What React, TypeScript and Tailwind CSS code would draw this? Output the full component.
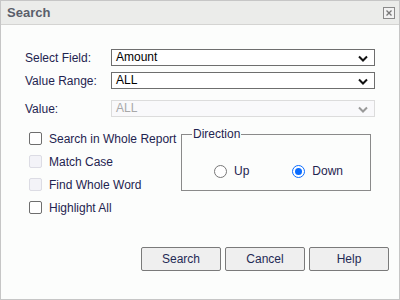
import React from "react";

const Chevron = ({ color }: { color: string }) => (
  <svg width="10" height="7" viewBox="0 0 10 7" className="absolute right-[6px] top-[5px]">
    <path d="M1 1.5 L5 5.5 L9 1.5" fill="none" stroke={color} strokeWidth="2" />
  </svg>
);

const Select = ({ value, disabled }: { value: string; disabled?: boolean }) => (
  <div
    className={
      disabled
        ? "relative h-[17px] w-[264px] border border-[#dcdcdc] bg-[#f9f9fb] pl-[4px] text-[12px] leading-[15px] text-[#a8a8a8]"
        : "relative h-[17px] w-[264px] border border-[#6e6e6e] bg-white pl-[4px] text-[12px] leading-[15px] text-black"
    }
  >
    {value}
    <Chevron color={disabled ? "#999" : "#111"} />
  </div>
);

const Check = ({ label, disabled }: { label: string; disabled?: boolean }) => (
  <div className="flex h-[23px] items-center">
    <div
      className={
        disabled
          ? "ml-[28px] h-[13px] w-[13px] rounded-[2px] border border-[#dcdce4] bg-[#f3f3f8]"
          : "ml-[28px] h-[13px] w-[13px] rounded-[2px] border border-[#6e6e6e] bg-white"
      }
    />
    <span className="ml-[7px]">{label}</span>
  </div>
);

const Btn = ({ label }: { label: string }) => (
  <div className="flex h-[24px] w-[80px] items-center justify-center rounded-[2px] border border-[#7a7a7a] bg-[#efefef] text-[12px] text-[#1f2a55]">
    {label}
  </div>
);

export default function App() {
  return (
    <div
      className="flex h-[300px] w-[400px] flex-col border border-[#c6c6c6] bg-[#fcfdfc] text-[12px] text-[#1f2450]"
      style={{ fontFamily: '"Liberation Sans", Arial, sans-serif' }}
    >
      <div className="flex h-[24px] shrink-0 items-center justify-between border-b border-[#d4d4d2] bg-[#ebecea] pl-[6px] pr-[4px]">
        <span className="text-[13px] font-bold text-[#5a5f6a]">Search</span>
        <div className="flex h-[12px] w-[12px] items-center justify-center border border-[#8a8a8a] bg-[#f2f2f2]">
          <svg width="8" height="8" viewBox="0 0 8 8">
            <path d="M1.5 1.5 L6.5 6.5 M6.5 1.5 L1.5 6.5" stroke="#777" strokeWidth="1.3" />
          </svg>
        </div>
      </div>
      <div className="flex flex-col pt-[24px]">
        <div className="flex h-[17px] items-center">
          <span className="ml-[24px] w-[86px]">Select Field:</span>
          <Select value="Amount" />
        </div>
        <div className="mt-[6px] flex h-[17px] items-center">
          <span className="ml-[24px] w-[86px]">Value Range:</span>
          <Select value="ALL" />
        </div>
        <div className="mt-[11px] flex h-[17px] items-center">
          <span className="ml-[24px] w-[86px]">Value:</span>
          <Select value="ALL" disabled />
        </div>
        <div className="mt-[10px] flex">
          <div className="flex w-[180px] flex-col">
            <Check label="Search in Whole Report" />
            <Check label="Match Case" disabled />
            <Check label="Find Whole Word" disabled />
            <Check label="Highlight All" />
          </div>
          <div className="relative mt-[7px] h-[57px] w-[190px] border border-[#8a8a8a]">
            <span className="absolute left-[10px] top-[-9px] bg-[#fcfdfc] px-[1px] leading-[16px]">Direction</span>
            <div className="flex items-center pt-[27px]">
              <div className="ml-[32px] h-[13px] w-[13px] rounded-full border border-[#777] bg-white" />
              <span className="ml-[7px]">Up</span>
              <div className="ml-[43px] flex h-[13px] w-[13px] items-center justify-center rounded-full border border-[#0a6cff] bg-white">
                <div className="h-[7px] w-[7px] rounded-full bg-[#0a6cff]" />
              </div>
              <span className="ml-[7px]">Down</span>
            </div>
          </div>
        </div>
        <div className="mt-[28px] flex justify-end gap-[4px] pr-[10px]">
          <Btn label="Search" />
          <Btn label="Cancel" />
          <Btn label="Help" />
        </div>
      </div>
    </div>
  );
}
